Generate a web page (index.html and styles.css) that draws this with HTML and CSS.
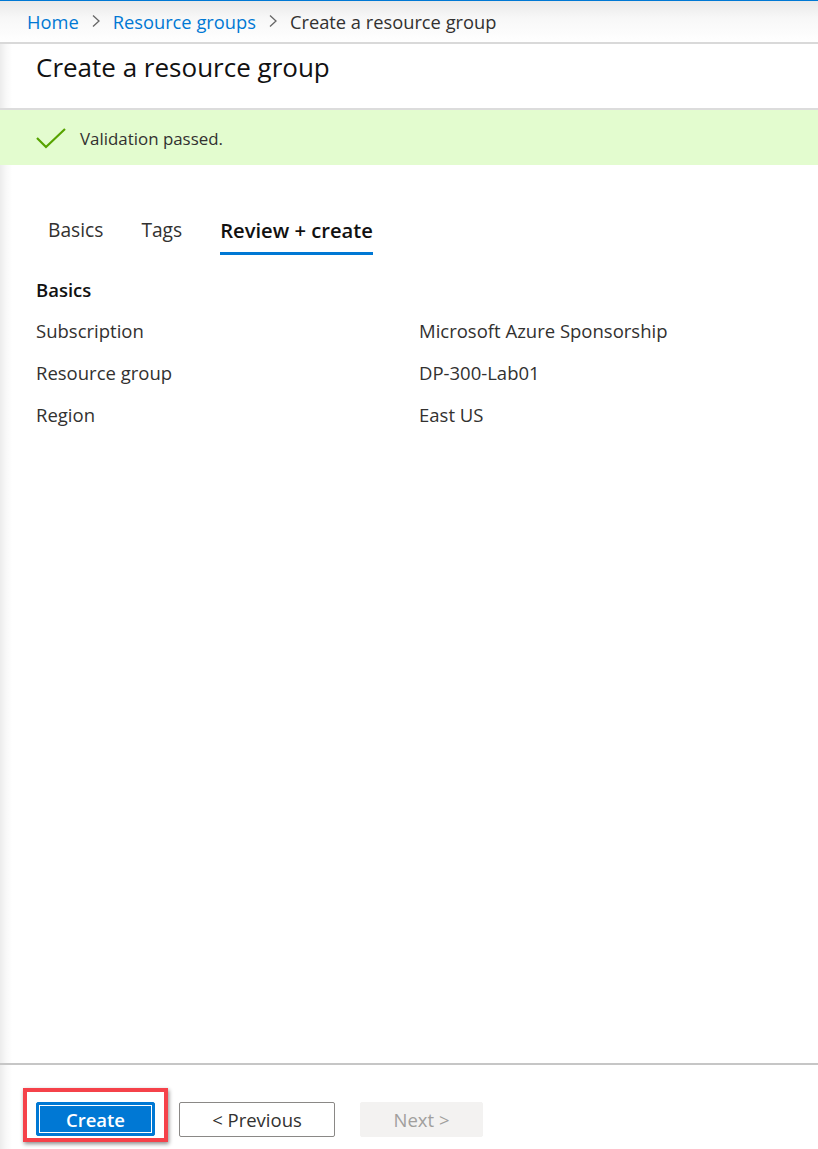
FILE: index.html
```html
<!DOCTYPE html>
<html>
<head>
<meta charset="utf-8">
<link rel="stylesheet" href="styles.css">
</head>
<body>
<div class="page">
  <header class="topbar">
    <nav class="crumbs">
      <a class="crumb-link">Home</a>
      <svg class="chev" width="10" height="14" viewBox="0 0 10 14"><path d="M2 1.5 L8 7 L2 12.5" fill="none" stroke="#666" stroke-width="1.3"/></svg>
      <a class="crumb-link">Resource groups</a>
      <svg class="chev" width="10" height="14" viewBox="0 0 10 14"><path d="M2 1.5 L8 7 L2 12.5" fill="none" stroke="#666" stroke-width="1.3"/></svg>
      <span class="crumb-current">Create a resource group</span>
    </nav>
  </header>
  <div class="titlebar">
    <h1 class="title">Create a resource group</h1>
  </div>
  <div class="banner">
    <svg class="check" width="32" height="22" viewBox="0 0 32 22"><path d="M2 11 L11 20 L30 2" fill="none" stroke="#57a300" stroke-width="2.2"/></svg>
    <span class="banner-text">Validation passed.</span>
  </div>
  <main class="content">
    <div class="tabs">
      <span class="tab">Basics</span>
      <span class="tab">Tags</span>
      <span class="tab active">Review + create</span>
    </div>
    <h2 class="section">Basics</h2>
    <div class="summary">
      <div class="label">Subscription</div><div class="value">Microsoft Azure Sponsorship</div>
      <div class="label">Resource group</div><div class="value">DP-300-Lab01</div>
      <div class="label">Region</div><div class="value">East US</div>
    </div>
  </main>
  <footer class="footer">
    <div class="actions">
      <div class="highlight">
        <button class="btn primary"><span class="focus">Create</span></button>
      </div>
      <button class="btn secondary">&lt; Previous</button>
      <button class="btn disabled">Next &gt;</button>
    </div>
  </footer>
</div>
</body>
</html>
```
FILE: styles.css
```css
* { box-sizing: border-box; }
html, body { margin: 0; padding: 0; }
body {
  font-family: "Open Sans", "Noto Sans", sans-serif;
  color: #323130;
  background: #fff;
}
.page {
  width: 818px;
  height: 1149px;
  display: flex;
  flex-direction: column;
  background: linear-gradient(to right, #ececec 0px, #f8f8f8 6px, #ffffff 12px);
}
.topbar {
  height: 44px;
  border-top: 1px solid #0078d4;
  border-bottom: 2px solid #d9d9d9;
  background: linear-gradient(to bottom, #e9e9e9 0%, #f7f7f7 40%, #ffffff 100%);
  display: flex;
  align-items: center;
  padding-left: 27px;
}
.crumbs {
  display: flex;
  align-items: center;
  gap: 11px;
  font-size: 18.3px;
  margin-top: -1px;
}
.crumb-link { color: #0078d4; }
.crumb-current { color: #323130; }
.chev { margin: 0 1px; }
.titlebar {
  height: 66px;
  border-bottom: 2px solid #dcdcdc;
  padding-left: 36px;
  padding-top: 5px;
}
.title {
  margin: 0;
  font-size: 26px;
  font-weight: 500;
  color: #111;
}
.banner {
  height: 55px;
  background: #e3fccf;
  display: flex;
  align-items: center;
  padding-left: 35px;
  gap: 13px;
}
.check { margin-top: 1px; }
.banner-text {
  font-size: 16.9px;
  color: #323130;
  margin-top: 1px;
}
.content {
  flex: 1;
  padding: 51px 0 0 36px;
}
.tabs {
  display: flex;
  align-items: flex-end;
  gap: 38px;
  padding-left: 12px;
  margin-bottom: 22px;
}
.tab {
  font-size: 19.2px;
  line-height: 28px;
  color: #323130;
  padding-bottom: 8px;
  border-bottom: 3px solid transparent;
}
.tab.active {
  font-size: 20.2px;
  font-weight: 600;
  color: #111;
  border-bottom-color: #0078d4;
}
.section {
  margin: 0 0 16px;
  font-size: 18.5px;
  font-weight: 600;
  color: #111;
}
.summary {
  display: grid;
  grid-template-columns: 383px 1fr;
  row-gap: 16px;
  font-size: 18.5px;
  line-height: 26px;
  color: #323130;
}
.footer {
  height: 86px;
  border-top: 2px solid #c6c6c6;
  padding: 23px 0 0 23px;
}
.actions {
  display: flex;
  align-items: flex-start;
}
.highlight {
  border: 4px solid #f5424a;
  padding: 10px 9px 2px 9px;
  box-shadow: 1px 2px 4px rgba(0,0,0,0.45);
  margin-right: 11px;
}
.btn {
  font-family: inherit;
  font-size: 18.5px;
  height: 35px;
  border-radius: 2px;
  padding: 0;
  display: flex;
  align-items: center;
  justify-content: center;
  margin-top: 14px;
}
.primary {
  width: 119px;
  height: 34px;
  background: #0078d4;
  border: 1px solid #0078d4;
  padding: 2px;
  margin-top: 0;
}
.focus {
  width: 100%;
  height: 100%;
  border: 1px solid #fff;
  color: #fff;
  font-weight: 600;
  display: flex;
  align-items: center;
  justify-content: center;
}
.secondary {
  width: 156px;
  background: #fff;
  border: 1px solid #8a8886;
  color: #323130;
  margin-right: 25px;
}
.disabled {
  width: 123px;
  background: #f3f2f1;
  border: 1px solid #f3f2f1;
  color: #a19f9d;
}
```
